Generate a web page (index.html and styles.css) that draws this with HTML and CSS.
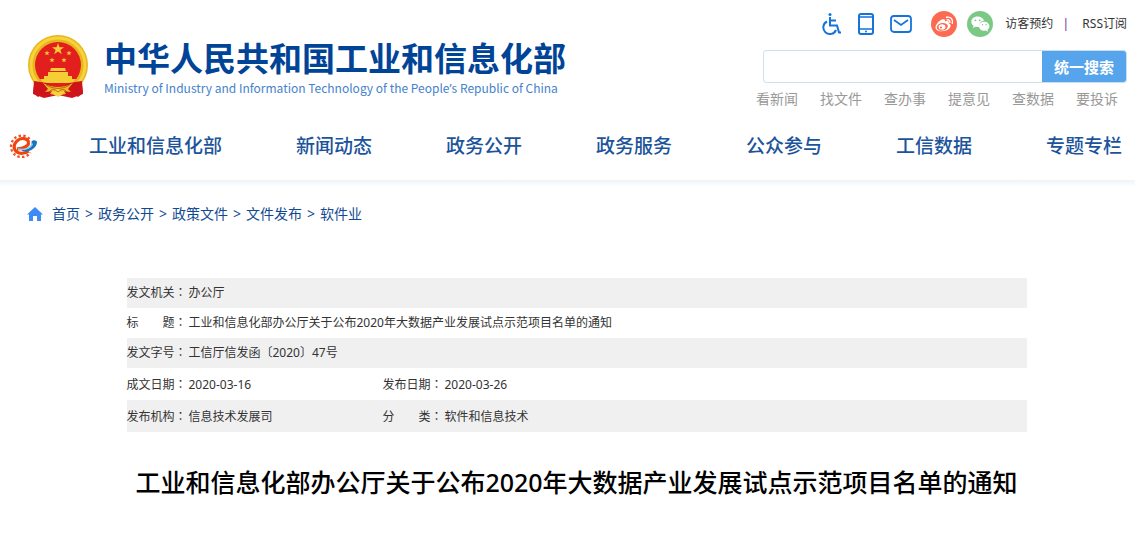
FILE: index.html
```html
<!DOCTYPE html>
<html lang="zh-CN">
<head>
<meta charset="utf-8">
<title>工业和信息化部办公厅关于公布2020年大数据产业发展试点示范项目名单的通知</title>
<link rel="stylesheet" href="styles.css">
</head>
<body>
<header class="header">
  <div class="top">
    <a class="brand" href="#">
      <svg class="emblem" viewBox="0 0 62 64" aria-hidden="true">
        <path d="M8 43 L6 59 L17 63 L31 60 L45 63 L56 59 L54 43Z" fill="#d3141b"/>
        <circle cx="31" cy="30" r="30" fill="#e9b51d"/>
        <circle cx="31" cy="30" r="27" fill="none" stroke="#f6d23d" stroke-width="3"/>
        <circle cx="31" cy="30" r="23" fill="#e21f1d"/>
        <path d="M31 8l1.500 4.200h4.500l-3.600 2.700 1.400 4.300-3.800-2.600-3.800 2.600 1.400-4.300-3.600-2.700h4.500z" fill="#f5cd35"/>
        <g fill="#f5cd35">
          <path id="star" d="M20 15.500l.7 1.700h2l-1.600 1.200.6 1.900-1.700-1.100-1.700 1.100.6-1.900-1.600-1.200h2z"/>
          <use href="#star" x="22"/><use href="#star" x="5" y="7"/><use href="#star" x="17" y="7"/>
          <path d="M24 33h14l1 3H23zM21 37h20v4h4v3h4l-3 4H16l-3-4h4v-3h4z"/>
        </g>
        <path d="M7 46l13 2 7 5-6 9-6-3-4 3-5-4z M55 46l-13 2-7 5 6 9 6-3 4 3 5-4z" fill="#cf131b"/>
        <path d="M16 48q15 8 30 0l-5 6 3 3-8-1-5 5-5-5-8 1 3-3z" fill="#edb923"/>
        <path d="M26 59l5-6 5 6-5 3z" fill="#f6d33f"/>
        <path d="M19 50q12 7 24 0M22 57q4-5 9 0q5-5 9 0" fill="none" stroke="#bd6d12"/>
      </svg>
      <span class="brand-text">
        <span class="brand-name">中华人民共和国工业和信息化部</span>
        <span class="brand-en" lang="en">Ministry of Industry and Information Technology of the People<span class="apostrophe">’</span>s Republic of China</span>
      </span>
    </a>
    <div class="tools">
      <div class="toolbar">
        <a class="tool" href="#" aria-label="无障碍"><svg width="20" height="24" viewBox="0 0 20 24" fill="none" stroke="#1673dc" stroke-width="2"><circle cx="8" cy="2.500" r="1.500" fill="#1673dc" stroke="none"/><path d="M8 5v8.500h7l2 7h2M8 8.500h6M5 9.500a6.600 6.600 0 1 0 9 8.500"/></svg></a>
        <a class="tool" href="#" aria-label="手机版"><svg width="16" height="24" viewBox="0 0 16 24" fill="none" stroke="#1673dc" stroke-width="2"><rect x="1" y="2" width="14" height="20" rx="2"/><path d="M1 5h14M1 17h14" stroke-width="1.500"/><circle cx="8" cy="19.500" r="1" fill="#1673dc" stroke="none"/></svg></a>
        <a class="tool" href="#" aria-label="邮箱"><svg width="22" height="24" viewBox="0 0 22 24" fill="none" stroke="#1673dc" stroke-width="1.800"><rect x="1" y="4" width="20" height="16" rx="3"/><path d="M4 8l7 5 7-5"/></svg></a>
        <a class="tool weibo" href="#" aria-label="微博"><svg width="26" height="26" viewBox="0 0 26 26"><circle cx="13" cy="13" r="13" fill="#fb6a51"/><path d="M11 8.500c2-.8 3.500-.2 3 2 3-1 4.500 0 3.700 2 2.300.7 2.500 2.700 1 4.500-2.700 3.500-10 4.500-13.200 1.800C2.500 16 7 10 11 8.500z" fill="#fff"/><ellipse cx="11.300" cy="15.800" rx="5.600" ry="3.800" transform="rotate(-10 11.300 15.800)" fill="#fb6a51"/><ellipse cx="11" cy="16" rx="3.400" ry="2.700" fill="#fff"/><circle cx="10" cy="16.500" r="1.100" fill="#fb6a51"/><path d="M15.500 6.300c4-1 7 2 5.800 6M16 8.900c2-.4 3.300.9 2.800 2.700" fill="none" stroke="#fff" stroke-width="1.400" stroke-linecap="round"/></svg></a>
        <a class="tool wechat" href="#" aria-label="微信"><svg width="26" height="26" viewBox="0 0 26 26"><circle cx="13" cy="13" r="13" fill="#7cc986"/><path d="M10.500 5.500c-3.500 0-6.200 2.300-6.200 5.200 0 1.700.9 3.100 2.300 4L6 17l2.500-1.300 2 .2 2 0C12 12 14 10 17 9.700c-.7-2.500-3.300-4.200-6.500-4.200z" fill="#fff"/><path d="M17.200 10.700c-3 0-5.200 2-5.200 4.500s2.200 4.500 5.200 4.500l1.600-.2 2.200 1.200-.5-2c1.200-.8 1.900-2 1.900-3.500 0-2.500-2.300-4.500-5.200-4.500z" fill="#fff"/><g fill="#7cc986"><circle cx="8.400" cy="9.300" r=".9"/><circle cx="12.700" cy="9.300" r=".9"/><circle cx="15.500" cy="13.800" r=".7"/><circle cx="19" cy="13.800" r=".7"/></g></svg></a>
        <a class="text-link" href="#">访客预约</a><span class="divider">|</span><a class="text-link" href="#">RSS订阅</a>
      </div>
      <form class="search">
        <input class="search-input" type="text" aria-label="搜索">
        <button class="search-button" type="button">统一搜索</button>
      </form>
      <div class="quick">
        <a href="#">看新闻</a><a href="#">找文件</a><a href="#">查办事</a><a href="#">提意见</a><a href="#">查数据</a><a href="#">要投诉</a>
      </div>
    </div>
  </div>
  <nav class="nav">
    <a class="nav-logo" href="#" aria-label="首页"><svg width="28" height="24" viewBox="0 0 28 24" fill="none"><path d="M20.500 5A10.700 10.700 0 1 0 21.500 18.500" stroke="#f0522d" stroke-width="2.400" stroke-dasharray="2.400 2.300"/><path d="M8 14.800C14 15 20 12 19.500 8.500C19 3.800 11.500 3 7.500 7.500C3 12.500 5.500 19.300 12.500 19.300C15.500 19.300 18 18.300 19.500 17" stroke="#f0430f" stroke-width="3.200"/><path d="M12 15.800c7 .3 11.500-2.800 10.500-8.300 1.500-2 5.500-1.500 5.500.8-.5 5.500-6.500 9.500-12 9.200-1.800 0-3.200-.6-4-1.700z" fill="#1876bd"/><path d="M9 15c7 1.400 13-1 14.500-5.500" stroke="#8bd2ed" stroke-width="1.400"/></svg></a>
    <div class="nav-list">
      <a href="#">工业和信息化部</a><a href="#">新闻动态</a><a href="#">政务公开</a><a href="#">政务服务</a><a href="#">公众参与</a><a href="#">工信数据</a><a href="#">专题专栏</a>
    </div>
  </nav>
</header>
<main>
  <nav class="crumbs" aria-label="当前位置">
    <svg class="home" width="16" height="14" viewBox="0 0 16 14"><path d="M8 0l8 7.500h-2V14h-4V9H6v5H2V7.500H0z" fill="#3d8cf5"/></svg>
    <a href="#">首页</a><span>&gt;</span><a href="#">政务公开</a><span>&gt;</span><a href="#">政策文件</a><span>&gt;</span><a href="#">文件发布</a><span>&gt;</span><a href="#">软件业</a>
  </nav>
  <article class="article">
    <table class="meta">
      <colgroup><col class="col-label"><col class="col-value"><col class="col-label"><col></colgroup>
      <tr class="shade"><th scope="row">发文机关<span class="colon" lang="zh-TW">：</span></th><td colspan="3">办公厅</td></tr>
      <tr><th scope="row">标　　题<span class="colon" lang="zh-TW">：</span></th><td colspan="3">工业和信息化部办公厅关于公布2020年大数据产业发展试点示范项目名单的通知</td></tr>
      <tr class="shade"><th scope="row">发文字号<span class="colon" lang="zh-TW">：</span></th><td colspan="3">工信厅信发函〔2020〕47号</td></tr>
      <tr class="tall"><th scope="row">成文日期<span class="colon" lang="zh-TW">：</span></th><td>2020-03-16</td><th scope="row">发布日期<span class="colon" lang="zh-TW">：</span></th><td>2020-03-26</td></tr>
      <tr class="tall shade"><th scope="row">发布机构<span class="colon" lang="zh-TW">：</span></th><td>信息技术发展司</td><th scope="row">分　　类<span class="colon" lang="zh-TW">：</span></th><td>软件和信息技术</td></tr>
    </table>
    <h1 class="title">工业和信息化部办公厅关于公布2020年大数据产业发展试点示范项目名单的通知</h1>
  </article>
</main>
</body>
</html>
```
FILE: styles.css
```css
* { box-sizing: border-box; }
body {
  margin: 0;
  background: #fff;
  color: #333;
  font: 12px/20px "Noto Sans", "Noto Sans CJK SC", sans-serif;
}
a { color: inherit; text-decoration: none; }
svg { display: block; }

.top { display: flex; justify-content: space-between; padding: 10px 8px 0 27px; }
.brand { display: flex; gap: 15px; padding-top: 25px; }
.emblem { width: 62px; height: 64px; }
.brand-text { display: flex; flex-direction: column; gap: 1px; white-space: nowrap; }
.brand-name {
  color: #004498;
  font: bold 33px/44px "Noto Sans CJK SC", sans-serif;
}
.brand-en { color: #4482cc; font: 12px/16px "Noto Sans CJK SC", sans-serif; }
.apostrophe { font-family: "Noto Sans", sans-serif; line-height: 1; }

.tools { display: flex; flex-direction: column; align-items: flex-end; width: 380px; }
.toolbar { display: flex; align-items: center; height: 28px; white-space: nowrap; }
.tool { margin-right: 16px; }
.weibo { margin-right: 10px; margin-left: 3px; }
.wechat { margin-right: 12px; }
.divider { width: 29px; padding-right: 4px; text-align: center; color: #7d1a86; }
.search { display: flex; width: 364px; height: 33px; margin: 12px 0 6px; }
.search-input {
  flex: 1;
  min-width: 0;
  padding: 0 8px;
  border: 1px solid #d0e0ee;
  border-right: 0;
  border-radius: 4px 0 0 4px;
  font-size: 14px;
}
.search-button {
  width: 85px;
  padding: 0;
  border: 1px solid #c9def3;
  border-left: 0;
  border-radius: 0 4px 4px 0;
  background: #56a4ec;
  color: #fff;
  font: bold 15px/20px "Noto Sans CJK SC", sans-serif;
}
.quick { display: flex; gap: 22px; padding-right: 9px; color: #999; font-size: 14px; }

.nav { display: flex; align-items: center; height: 71px; padding: 3px 13px 0 9px; }
.nav-logo { width: 80px; flex: none; }
.nav-list {
  flex: 1;
  display: flex;
  justify-content: space-between;
  color: #1c549b;
  font-size: 19px;
  font-weight: 500;
  line-height: 28px;
  white-space: nowrap;
}
.header::after { content: ""; display: block; height: 7px; background: linear-gradient(#eff4f9, #fff); }

.crumbs {
  display: flex;
  align-items: center;
  padding: 17px 27px 0;
  color: #114a92;
  font-size: 14px;
}
.crumbs span { width: 18px; text-align: center; }
.home { margin-right: 9px; }

.article { max-width: 918px; margin: 54px auto 0; padding-left: 18px; }
.meta { width: 100%; border-collapse: collapse; table-layout: fixed; }
.meta th, .meta td { height: 30px; padding: 0; font-weight: normal; text-align: left; white-space: nowrap; }
.meta .tall th, .meta .tall td { height: 32px; padding-top: 2px; }
.col-label { width: 62px; }
.col-value { width: 194px; }
.shade { background: #f0f0f0; }
.colon { font-family: "Noto Sans CJK TC", sans-serif; line-height: 1; }
.title {
  margin: 32px 0;
  color: #000;
  font-size: 25px;
  font-weight: 500;
  line-height: 36px;
  text-align: center;
  white-space: nowrap;
}
```
